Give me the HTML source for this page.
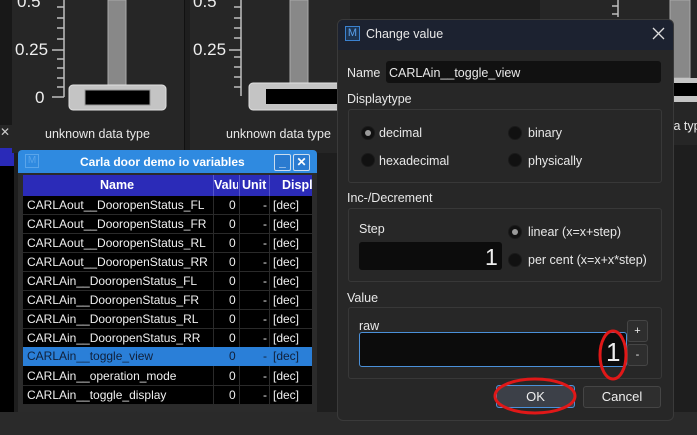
<!DOCTYPE html>
<html><head><meta charset="utf-8"><style>
*{margin:0;padding:0;box-sizing:border-box}
body{width:697px;height:435px;overflow:hidden;background:#1e1e1e;font-family:"Liberation Sans",sans-serif;position:relative;color:#e8e8e8}
.a{position:absolute}
.t{font-size:12px;white-space:nowrap}
.row{position:absolute;left:23px;width:289px;height:19px;border-bottom:1px solid #2a2a2a;font-size:12px;color:#f0f0f0}
.row span{position:absolute;top:2px}
.rad{position:absolute;width:14px;height:14px;border-radius:50%;background:#111;border:1px solid #1a1a1a}
.rad.on::after{content:"";position:absolute;left:3px;top:3px;width:6px;height:6px;border-radius:50%;background:#9a9a9a}
.lbl{position:absolute;font-size:12.5px;color:#e8e8e8;white-space:nowrap}
.grp{position:absolute;border:1px solid #383838;border-radius:3px}
.btn{position:absolute;background:#2e2e2e;border:1px solid #454545;border-radius:3px;font-size:13px;text-align:center;color:#eee}
</style></head><body>
<div class="a" style="left:0;top:0;width:12px;height:125px;background:#181818"></div>
<div class="a" style="left:0;top:125px;width:14px;height:23px;background:#262626;font-size:12px;color:#ccc">✕</div>
<div class="a" style="left:0;top:148px;width:14px;height:18px;background:#2a2ab8"></div>
<div class="a" style="left:0;top:166px;width:14px;height:246px;background:#000"></div>
<div class="a" style="left:12px;top:0;width:173px;height:153px;background:#262626;border-right:1px solid #111"></div>
<div class="a" style="left:190px;top:0;width:160px;height:153px;background:#262626"></div>
<div class="a" style="left:540px;top:0;width:157px;height:145px;background:#262626"></div>
<svg class="a" style="left:0;top:0" width="697" height="160">
<g stroke="#bdbdbd" stroke-width="1.5" fill="none">
<path d="M64 0V97M57 7H64M57 18H64M57 28H64M57 39H64M52 50H64M57 59H64M57 68H64M57 78H64M57 87H64M52 97H64"/>
<path d="M241 0V96M234 7H241M234 18H241M234 28H241M234 38H241M229 50H241M234 57H241M234 67H241M234 77H241M234 87H241"/>
<path d="M618 0V17M612 6H618M612 14H618"/>
</g>
<rect x="108" y="0" width="18" height="86" fill="#888" stroke="#aaa"/>
<rect x="290" y="0" width="18" height="86" fill="#888" stroke="#aaa"/>
<rect x="670" y="0" width="20" height="78" fill="#888" stroke="#aaa"/>
<rect x="69" y="85" width="97" height="25" rx="4" fill="#c4c4c4" stroke="#e0e0e0"/>
<rect x="85" y="90" width="65" height="15" fill="#000" stroke="#999"/>
<rect x="249" y="83" width="100" height="27" rx="4" fill="#c4c4c4" stroke="#e0e0e0"/>
<rect x="266" y="89" width="90" height="15" fill="#000"/>
<rect x="673" y="78" width="30" height="24" fill="#c4c4c4"/>
<rect x="673" y="83" width="30" height="13" fill="#000"/>
</svg>
<div class="a t" style="left:17px;top:-8px;font-size:17px;color:#eee">0.5</div>
<div class="a t" style="left:15px;top:40px;font-size:17px;color:#eee">0.25</div>
<div class="a t" style="left:35px;top:88px;font-size:17px;color:#eee">0</div>
<div class="a t" style="left:193px;top:-8px;font-size:17px;color:#eee">0.5</div>
<div class="a t" style="left:193px;top:40px;font-size:17px;color:#eee">0.25</div>
<div class="a t" style="left:45px;top:127px;font-size:12.5px">unknown data type</div>
<div class="a t" style="left:226px;top:127px;font-size:12.5px">unknown data type</div>
<div class="a t" style="left:670px;top:119px;font-size:12.5px">ta typ</div>
<div class="a" style="left:18px;top:150px;width:299px;height:262px;background:#2b2b2b;border-radius:4px 4px 0 0"></div>
<div class="a" style="left:18px;top:150px;width:299px;height:23px;background:#2f8ae0;border-radius:4px 4px 0 0"></div>
<div class="a" style="left:25px;top:154px;width:14px;height:14px;border:1px solid #5aa5ea;color:#5aa5ea;font-size:10px;text-align:center;line-height:12px">M</div>
<div class="a t" style="left:80px;top:155px;font-weight:bold;color:#fff;font-size:12px">Carla door demo io variables</div>
<div class="a" style="left:274px;top:154px;width:17px;height:17px;border:1px solid #cde;border-radius:2px;background:#2a7bd0;color:#fff;font-size:12px;text-align:center;line-height:15px;font-weight:bold">_</div>
<div class="a" style="left:293px;top:154px;width:17px;height:17px;border:1px solid #cde;border-radius:2px;background:#2a7bd0;color:#fff;font-size:12px;text-align:center;line-height:15px;font-weight:bold">✕</div>
<div class="a" style="left:23px;top:175px;width:289px;height:21px;background:#2b2bb8"></div>
<div class="a t" style="left:100px;top:178px;font-weight:bold;color:#fff;font-size:12.5px">Name</div>
<div class="a" style="left:213px;top:175px;width:1px;height:21px;background:#5555cc"></div>
<div class="a t" style="left:214px;top:178px;font-weight:bold;color:#fff;font-size:12.5px;width:24px;overflow:hidden">Value</div>
<div class="a" style="left:239px;top:175px;width:1px;height:21px;background:#5555cc"></div>
<div class="a t" style="left:242px;top:178px;font-weight:bold;color:#fff;font-size:12.5px">Unit</div>
<div class="a" style="left:269px;top:175px;width:1px;height:21px;background:#5555cc"></div>
<div class="a t" style="left:282px;top:178px;font-weight:bold;color:#fff;font-size:12.5px;width:30px;overflow:hidden">Displ</div>
<div class="a" style="left:23px;top:196px;width:289px;height:209px;background:#000"></div>
<div class="a" style="left:213px;top:196px;width:1px;height:209px;background:#2a2a2a"></div>
<div class="a" style="left:239px;top:196px;width:1px;height:209px;background:#2a2a2a"></div>
<div class="a" style="left:269px;top:196px;width:1px;height:209px;background:#2a2a2a"></div>
<div class="row" style="top:196px"><span style="left:4px">CARLAout__DooropenStatus_FL</span><span style="left:206px">0</span><span style="left:240px">-</span><span style="left:250px">[dec]</span></div>
<div class="row" style="top:215px"><span style="left:4px">CARLAout__DooropenStatus_FR</span><span style="left:206px">0</span><span style="left:240px">-</span><span style="left:250px">[dec]</span></div>
<div class="row" style="top:234px"><span style="left:4px">CARLAout__DooropenStatus_RL</span><span style="left:206px">0</span><span style="left:240px">-</span><span style="left:250px">[dec]</span></div>
<div class="row" style="top:253px"><span style="left:4px">CARLAout__DooropenStatus_RR</span><span style="left:206px">0</span><span style="left:240px">-</span><span style="left:250px">[dec]</span></div>
<div class="row" style="top:272px"><span style="left:4px">CARLAin__DooropenStatus_FL</span><span style="left:206px">0</span><span style="left:240px">-</span><span style="left:250px">[dec]</span></div>
<div class="row" style="top:291px"><span style="left:4px">CARLAin__DooropenStatus_FR</span><span style="left:206px">0</span><span style="left:240px">-</span><span style="left:250px">[dec]</span></div>
<div class="row" style="top:310px"><span style="left:4px">CARLAin__DooropenStatus_RL</span><span style="left:206px">0</span><span style="left:240px">-</span><span style="left:250px">[dec]</span></div>
<div class="row" style="top:329px"><span style="left:4px">CARLAin__DooropenStatus_RR</span><span style="left:206px">0</span><span style="left:240px">-</span><span style="left:250px">[dec]</span></div>
<div class="row" style="top:347px;background:#2a7fd8;color:#10203a;border-color:#2a7fd8"><span style="left:4px">CARLAin__toggle_view</span><span style="left:206px">0</span><span style="left:240px">-</span><span style="left:250px">[dec]</span></div>
<div class="row" style="top:367px"><span style="left:4px">CARLAin__operation_mode</span><span style="left:206px">0</span><span style="left:240px">-</span><span style="left:250px">[dec]</span></div>
<div class="row" style="top:386px"><span style="left:4px">CARLAin__toggle_display</span><span style="left:206px">0</span><span style="left:240px">-</span><span style="left:250px">[dec]</span></div>
<div class="a" style="left:0;top:412px;width:697px;height:23px;background:#2a2a2a"></div>
<div class="a" style="left:337px;top:19px;width:337px;height:402px;background:#272727;border:1px solid #3a3a3a;border-radius:6px;overflow:hidden">
<div class="a" style="left:0;top:0;width:337px;height:30px;background:#1c2230"></div>
</div>
<div class="a" style="left:345px;top:26px;width:15px;height:15px;border:1px solid #3b82d0;background:#1d3452;color:#5aa0ec;font-size:11px;text-align:center;line-height:13px">M</div>
<div class="lbl" style="left:366px;top:27px">Change value</div>
<svg class="a" style="left:652px;top:27px" width="13" height="13"><path d="M1 1L12 12M12 1L1 12" stroke="#ddd" stroke-width="1.3"/></svg>
<div class="lbl" style="left:347px;top:66px">Name</div>
<div class="a" style="left:386px;top:61px;width:275px;height:22px;background:#111;border-radius:3px"></div>
<div class="lbl" style="left:389px;top:66px">CARLAin__toggle_view</div>
<div class="lbl" style="left:347px;top:92px">Displaytype</div>
<div class="grp" style="left:348px;top:109px;width:314px;height:74px"></div>
<div class="rad on" style="left:361px;top:126px"></div><div class="lbl" style="left:379px;top:126px">decimal</div>
<div class="rad" style="left:508px;top:126px"></div><div class="lbl" style="left:528px;top:126px">binary</div>
<div class="rad" style="left:361px;top:153px"></div><div class="lbl" style="left:379px;top:154px">hexadecimal</div>
<div class="rad" style="left:508px;top:153px"></div><div class="lbl" style="left:528px;top:154px">physically</div>
<div class="lbl" style="left:347px;top:191px">Inc-/Decrement</div>
<div class="grp" style="left:348px;top:208px;width:314px;height:74px"></div>
<div class="lbl" style="left:359px;top:222px">Step</div>
<div class="a" style="left:359px;top:242px;width:143px;height:28px;background:#0c0c0c;border-radius:3px"></div>
<div class="a t" style="left:485px;top:244px;font-size:23px;color:#eee">1</div>
<div class="rad on" style="left:508px;top:225px"></div><div class="lbl" style="left:528px;top:225px">linear (x=x+step)</div>
<div class="rad" style="left:508px;top:253px"></div><div class="lbl" style="left:528px;top:253px">per cent (x=x+x*step)</div>
<div class="lbl" style="left:347px;top:291px">Value</div>
<div class="grp" style="left:348px;top:307px;width:314px;height:72px"></div>
<div class="lbl" style="left:359px;top:319px">raw</div>
<div class="a" style="left:359px;top:332px;width:268px;height:35px;background:#0c0c0c;border:1px solid #4a90d9;border-radius:3px"></div>
<div class="a t" style="left:606px;top:337px;font-size:26px;color:#eee">1</div>
<div class="btn" style="left:627px;top:320px;width:21px;height:22px;line-height:20px;font-size:11px">+</div>
<div class="btn" style="left:627px;top:344px;width:21px;height:22px;line-height:20px;font-size:11px">-</div>
<div class="btn" style="left:496px;top:385px;width:79px;height:23px;line-height:21px;background:#3c4048;border-color:#4a90d9">OK</div>
<div class="btn" style="left:583px;top:386px;width:78px;height:22px;line-height:20px">Cancel</div>
<svg class="a" style="left:0;top:0" width="697" height="435">
<ellipse cx="613" cy="355" rx="13" ry="24" fill="none" stroke="#e01818" stroke-width="3"/>
<ellipse cx="535" cy="396" rx="40" ry="17" fill="none" stroke="#e01818" stroke-width="3"/>
</svg>
</body></html>
